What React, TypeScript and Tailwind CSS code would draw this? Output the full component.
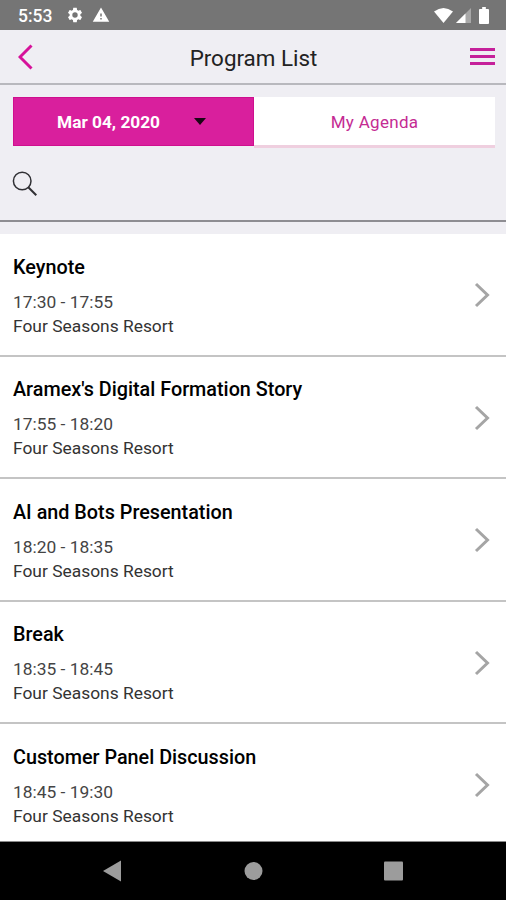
type Session = { title: string; time: string };

const sessions: Session[] = [
  { title: 'Keynote', time: '17:30 - 17:55' },
  { title: "Aramex's Digital Formation Story", time: '17:55 - 18:20' },
  { title: 'AI and Bots Presentation', time: '18:20 - 18:35' },
  { title: 'Break', time: '18:35 - 18:45' },
  { title: 'Customer Panel Discussion', time: '18:45 - 19:30' },
];

function StatusBar() {
  return (
    <div className="flex h-[30px] shrink-0 items-center bg-[#757575] pl-[18px] pr-[16px] text-white">
      <span className="w-[48px] pt-[1px] text-[17.5px] leading-5 font-medium">5:53</span>
      <svg className="size-[18px]" viewBox="0 0 24 24" fill="currentColor">
        <path d="M19.14 12.94c.04-.3.06-.61.06-.94 0-.32-.02-.64-.07-.94l2.03-1.58c.18-.14.23-.41.12-.61l-1.92-3.32c-.12-.22-.37-.29-.59-.22l-2.39.96c-.5-.38-1.03-.7-1.62-.94l-.36-2.54c-.04-.24-.24-.41-.48-.41h-3.84c-.24 0-.43.17-.47.41l-.36 2.54c-.59.24-1.13.57-1.62.94l-2.39-.96c-.22-.08-.47 0-.59.22L2.74 8.87c-.12.21-.08.47.12.61l2.03 1.58c-.05.3-.09.63-.09.94s.02.64.07.94l-2.03 1.58c-.18.14-.23.41-.12.61l1.92 3.32c.12.22.37.29.59.22l2.39-.96c.5.38 1.03.7 1.62.94l.36 2.54c.05.24.24.41.48.41h3.84c.24 0 .44-.17.47-.41l.36-2.54c.59-.24 1.13-.56 1.62-.94l2.39.96c.22.08.47 0 .59-.22l1.92-3.32c.12-.22.07-.47-.12-.61l-2.01-1.58zM12 15.6A3.6 3.6 0 1 1 12 8.400a3.600 3.600 0 0 1 0 7.200z" />
      </svg>
      <svg className="ml-[8px] size-[18px]" viewBox="0 0 24 24" fill="currentColor">
        <path d="M1 21h22L12 2 1 21zm12-3h-2v-2h2v2zm0-4h-2v-4h2v4z" />
      </svg>
      <div className="flex-1" />
      <svg className="mt-[1px] h-[16px] w-[19px]" viewBox="0 0 19 16">
        <path d="M0 3.500Q9.500-3.500 19 3.500L9.500 15z" fill="#fff" />
      </svg>
      <svg className="ml-[3px] mt-[1px] h-[15px] w-[15px]" viewBox="0 0 15 15">
        <path d="M15 0V15H0z" fill="#a8a8a8" />
        <path d="M9.500 5.500V15H0z" fill="#fff" />
      </svg>
      <svg className="ml-[8px] mr-[1px] h-[17px] w-[10px]" viewBox="0 0 11 17" preserveAspectRatio="none">
        <path d="M3.500 0h4v2H10a1 1 0 0 1 1 1v13a1 1 0 0 1-1 1H1a1 1 0 0 1-1-1V3a1 1 0 0 1 1-1h2.500z" fill="#fff" />
      </svg>
    </div>
  );
}

function Header() {
  return (
    <header className="flex h-[55px] shrink-0 items-center justify-between border-b-2 border-[#b8b8bd] bg-[#efeef3] pl-[18px] pr-[11px]">
      <svg className="h-[26px] w-[26px]" viewBox="0 0 26 26" fill="none" stroke="#d6129a" strokeWidth="3">
        <path d="M13.500 1.500 2 13l11.500 11.500" />
      </svg>
      <h1 className="mr-[7px] pt-[2px] text-[22.4px] leading-7 text-[#222]">Program List</h1>
      <div className="flex w-[25px] flex-col gap-[4px]">
        <div className="h-[3px] bg-[#c5209a]" />
        <div className="h-[3px] bg-[#c5209a]" />
        <div className="h-[3px] bg-[#c5209a]" />
      </div>
    </header>
  );
}

function Filters() {
  return (
    <section className="h-[137px] shrink-0 border-b-2 border-[#8e8d92] bg-[#efeef3] pl-[13px] pr-[11px] pt-[12px]">
      <div className="flex">
        <button className="flex h-[49px] w-[241px] items-center border border-[#cf0f8e] bg-[#d91f9d] pl-[43px] text-left text-[17.3px] font-bold text-white">
          <span className="w-[137px] pt-[2px]">Mar 04, 2020</span>
          <svg className="h-[7px] w-[12px]" viewBox="0 0 12 7">
            <path d="M0 0h12L6 7z" fill="#1a0614" />
          </svg>
        </button>
        <button className="h-[51px] w-[241px] border-b-[3px] border-[#efcfdf] bg-white pt-[3px] text-[17px] tracking-[0.3px] text-[#c42b93]">
          My Agenda
        </button>
      </div>
      <svg className="-ml-[1px] mt-[23px] size-[26px]" viewBox="0 0 26 26" fill="none" stroke="#303034">
        <circle cx="10.200" cy="10" r="8.800" strokeWidth="1.500" />
        <path d="m16.300 16.300 8 8" strokeWidth="2" />
      </svg>
    </section>
  );
}

function SessionRow({ title, time }: Session) {
  return (
    <li className="flex h-[122.500px] shrink-0 items-center justify-between border-b-2 border-[#c4c4c4] bg-white pl-[13px] pr-[16px]">
      <div className="pt-[5px]">
        <h2 className="text-[19.8px] leading-6 font-medium text-black">{title}</h2>
        <p className="mt-[10px] text-[17.4px] leading-6 text-[#444]">{time}</p>
        <p className="text-[17.4px] leading-6 text-[#333]">Four Seasons Resort</p>
      </div>
      <svg className="mt-[2px] h-[26px] w-[16px]" viewBox="0 0 16 26" fill="none" stroke="#a5a5a5" strokeWidth="3">
        <path d="M2 2l11.500 11L2 24" />
      </svg>
    </li>
  );
}

function NavBar() {
  return (
    <nav className="flex h-[59px] shrink-0 items-center border-t border-[#8a8a8a] bg-black pl-[103px]">
      <svg className="h-[22px] w-[300px]" viewBox="0 0 300 22" fill="#9c9c9c">
        <path d="M0 11 18 .5v21z" />
        <circle cx="150.500" cy="11" r="9" />
        <rect x="281" y="1.500" width="19" height="19" rx="1" />
      </svg>
    </nav>
  );
}

export default function App() {
  return (
    <div className="flex h-[900px] w-[506px] flex-col overflow-hidden bg-[#efeef3] font-['Roboto',sans-serif]">
      <StatusBar />
      <Header />
      <Filters />
      <ul className="mt-[12px] flex min-h-0 flex-1 flex-col overflow-hidden">
        {sessions.map((s) => (
          <SessionRow key={s.title} {...s} />
        ))}
      </ul>
      <NavBar />
    </div>
  );
}
